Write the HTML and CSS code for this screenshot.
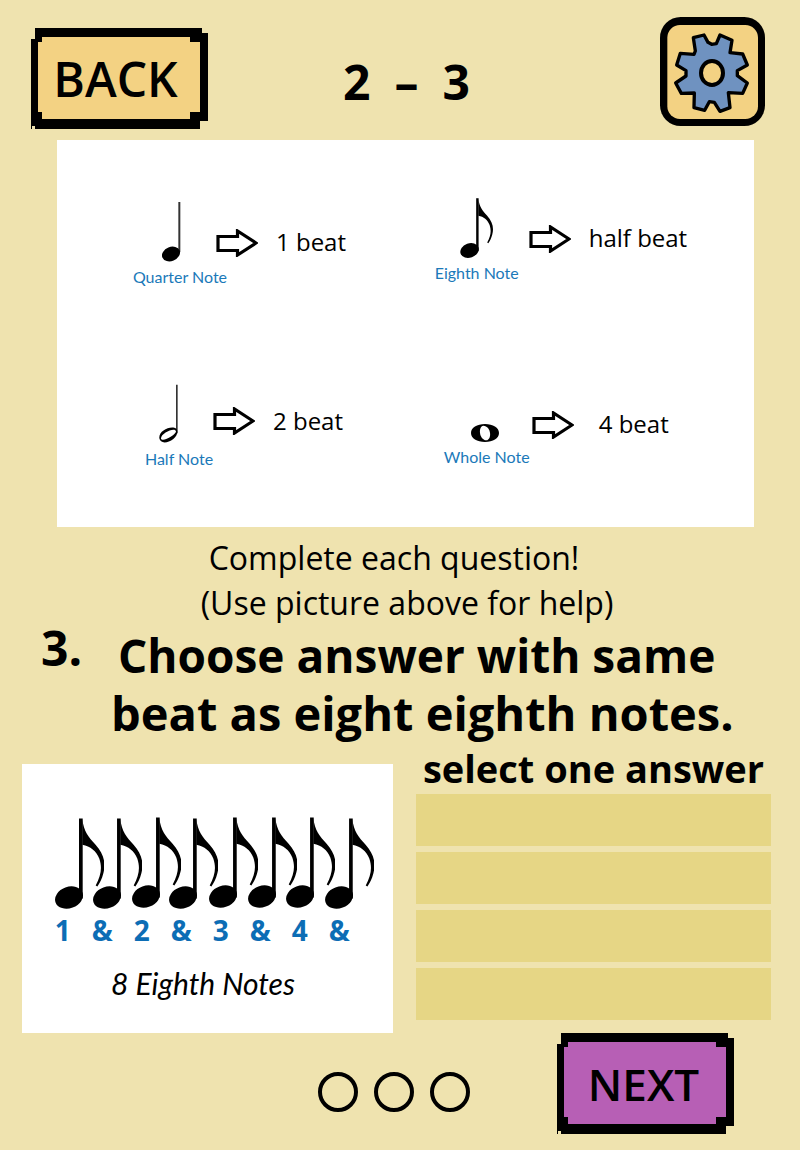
FILE: index.html
```html
<!DOCTYPE html>
<html lang="en">
<head>
<meta charset="utf-8">
<meta name="viewport" content="width=device-width, initial-scale=1">
<title>Note Values 2 – 3</title>
<link rel="stylesheet" href="styles.css">
</head>
<body>
<svg class="sprites" aria-hidden="true">
  <symbol id="frame" viewBox="0 0 177 101" preserveAspectRatio="none">
    <path d="M4 0H171V5H177V93H169V101H4V98H1V101H0V11H4Z" fill="#000"/>
    <path d="M11 9H159V14H169V84H159V91H11V84H7V14H11Z" fill="currentColor"/>
  </symbol>
  <symbol id="arrow" viewBox="0 0 42 28">
    <path d="M2 7.500H21.500V2L40 14L21.500 26V21.500H2Z" fill="none" stroke="#000" stroke-width="3.200"/>
  </symbol>
  <symbol id="eighth" viewBox="0 0 147 272">
    <path d="M72 1h11v240h-11z"/>
    <ellipse cx="42" cy="238" rx="43" ry="32" transform="rotate(-20 42 238)"/>
    <path d="M82 3C86 40 101 56 121 79C147 108 153 135 145 165C141 182 134 194 127 205L122 202C138 171 142 150 133 122C124 99 106 84 82 80Z"/>
  </symbol>
</svg>

<main class="page">
  <header class="topbar">
    <button class="pixel-btn back" type="button">
      <svg class="pixel-frame" aria-hidden="true"><use href="#frame"/></svg>
      <span class="pixel-label">BACK</span>
    </button>
    <h1 class="level"><span>2</span><span>–</span><span>3</span></h1>
    <button class="settings" type="button" aria-label="Settings">
      <svg class="gear" viewBox="60 36 315 327" aria-hidden="true">
        <rect x="60" y="36" width="315" height="327" rx="62"/>
        <rect x="82" y="60" width="272" height="282" rx="38" fill="#f3d283"/>
        <path d="M160 98L192 90L204 112L215 118L229 116L240 90L276 106L270 143L308 147L322 180L292 197V212L322 234L308 265L265 263L270 308L240 319L223 292L208 290L194 316L162 308L163 264L124 265L107 234L138 213V197L110 180L121 145L162 148L166 138Z" fill="#6f92c0" stroke="#000" stroke-width="10" stroke-linejoin="round"/>
        <ellipse cx="216" cy="204" rx="33" ry="36" fill="#f3d283" stroke="#000" stroke-width="12"/>
      </svg>
    </button>
  </header>

  <section class="legend" aria-label="Note values">
    <div class="value value-quarter">
      <svg class="note" viewBox="0 0 57 180" aria-hidden="true">
        <path d="M49 0h6v150h-6z" fill="#333"/>
        <ellipse cx="27" cy="156" rx="28" ry="21" transform="rotate(-22 27 156)"/>
      </svg>
      <svg class="arrow" aria-hidden="true"><use href="#arrow"/></svg>
      <span class="beats">1 beat</span>
      <span class="note-name">Quarter Note</span>
    </div>
    <div class="value value-eighth">
      <svg class="note note-eighth" aria-hidden="true"><use href="#eighth"/></svg>
      <svg class="arrow" aria-hidden="true"><use href="#arrow"/></svg>
      <span class="beats">half beat</span>
      <span class="note-name">Eighth Note</span>
    </div>
    <div class="value value-half">
      <svg class="note" viewBox="0 0 57 180" aria-hidden="true">
        <path d="M51 2h5v146h-5z" fill="#333"/>
        <path fill-rule="evenodd" d="M1 163C-1 142 27 127 46 131C59 134 58 152 43 165C26 178 4 180 1 163ZM6 164C10 176 51 153 51 142C49 128 5 147 6 164Z"/>
      </svg>
      <svg class="arrow" aria-hidden="true"><use href="#arrow"/></svg>
      <span class="beats">2 beat</span>
      <span class="note-name">Half Note</span>
    </div>
    <div class="value value-whole">
      <svg class="note note-whole" viewBox="0 0 84 54" aria-hidden="true">
        <path fill-rule="evenodd" d="M42 0C66 0 84 11 84 27S66 54 42 54S0 43 0 27S18 0 42 0ZM37 5C21 7 24 47 46 49C64 47 61 6 37 5Z"/>
      </svg>
      <svg class="arrow" aria-hidden="true"><use href="#arrow"/></svg>
      <span class="beats">4 beat</span>
      <span class="note-name">Whole Note</span>
    </div>
  </section>

  <div class="instructions">
    <p class="complete">Complete each question!</p>
    <p class="hint">(Use picture above for help)</p>
  </div>

  <div class="question">
    <span class="number">3.</span>
    <h2 class="prompt">
      <span class="prompt-line">Choose answer with same</span>
      <span class="prompt-line">beat as eight eighth notes.</span>
    </h2>
  </div>

  <div class="work">
    <figure class="notes-card">
      <svg class="notes" viewBox="0 0 320 93" role="img" aria-label="Eight eighth notes">
        <use href="#eighth" x="0" y="1" width="49" height="91"/>
        <use href="#eighth" x="38" y="1" width="49" height="91"/>
        <use href="#eighth" x="77" y="0" width="49" height="91"/>
        <use href="#eighth" x="114" y="1" width="49" height="91"/>
        <use href="#eighth" x="154" y="0" width="49" height="91"/>
        <use href="#eighth" x="193" y="0" width="49" height="91"/>
        <use href="#eighth" x="231" y="0" width="49" height="91"/>
        <use href="#eighth" x="270" y="1" width="49" height="91"/>
      </svg>
      <div class="counts">
        <span>1</span><span>&amp;</span><span>2</span><span>&amp;</span><span>3</span><span>&amp;</span><span>4</span><span>&amp;</span>
      </div>
      <figcaption class="caption">8 Eighth Notes</figcaption>
    </figure>
    <div class="answers">
      <h3 class="select">select one answer</h3>
      <button class="answer" type="button" aria-label="Answer 1"></button>
      <button class="answer" type="button" aria-label="Answer 2"></button>
      <button class="answer" type="button" aria-label="Answer 3"></button>
      <button class="answer" type="button" aria-label="Answer 4"></button>
    </div>
  </div>

  <footer class="bottombar">
    <div class="progress">
      <span class="dot"></span><span class="dot"></span><span class="dot"></span>
    </div>
    <button class="pixel-btn next" type="button">
      <svg class="pixel-frame" aria-hidden="true"><use href="#frame"/></svg>
      <span class="pixel-label">NEXT</span>
    </button>
  </footer>
</main>
</body>
</html>
```
FILE: styles.css
```css
* { box-sizing: border-box; }

body {
  margin: 0;
  background: #efe3af;
  color: #000;
  font-family: "Comic Sans MS", "Open Sans", sans-serif;
}

h1, h2, h3, p, figure { margin: 0; }

button {
  border: 0;
  padding: 0;
  color: inherit;
  font: inherit;
  cursor: pointer;
}

.sprites { position: absolute; width: 0; height: 0; }

.topbar {
  display: grid;
  grid-template-columns: 1fr auto 1fr;
  align-items: start;
  padding: 17px 35px 11px 31px;
}

.pixel-btn {
  position: relative;
  width: 177px;
  height: 101px;
  background: none;
}

.pixel-frame {
  position: absolute;
  inset: 0;
  width: 100%;
  height: 100%;
}

.pixel-label { position: relative; }

.back { margin-top: 11px; font-size: 48px; font-weight: 600; }
.back .pixel-frame { color: #f3d283; }
.back .pixel-label { padding-right: 8px; }

.next { font-size: 44px; font-weight: 600; }
.next .pixel-frame { color: #b75fb5; }
.next .pixel-label { padding-right: 4px; }

.level {
  display: flex;
  gap: 24px;
  padding: 32px 0 0 17px;
  font-size: 48px;
  line-height: 66px;
}

.settings {
  justify-self: end;
  width: 105px;
  height: 109px;
  background: none;
}

.gear { display: block; width: 100%; height: 100%; }

.legend {
  display: grid;
  grid-template-columns: 43fr 57fr;
  grid-template-rows: 184px 145px;
  margin: 0 46px 0 57px;
  padding-top: 58px;
  background: #fff;
}

.value {
  display: grid;
  grid-template-columns: 84px 42px auto;
  grid-template-rows: 60px 28px;
  align-content: start;
  align-items: center;
  padding: 4px 0 0 75px;
}

.value-eighth { grid-template-columns: 100px 42px auto; padding: 0 0 0 72px; }
.value-half { grid-template-columns: 82px 42px auto; padding: 2px 0 0 74px; }
.value-whole { grid-template-columns: 93px 42px auto; padding: 0 0 0 82px; }

.note { width: 19px; height: 60px; margin-left: 30px; }
.note-eighth { width: 35px; }
.value-half .note { margin-left: 28px; }
.note-whole { width: 28px; height: 18px; align-self: end; margin-left: 32px; }

.arrow { width: 42px; height: 28px; margin-top: 22px; }
.value-half .arrow { margin-top: 14px; }
.value-whole .arrow { margin-top: 26px; }

.beats {
  padding: 20px 0 0 18px;
  font-size: 24px;
  line-height: 28px;
}
.value-half .beats { padding-top: 14px; }
.value-whole .beats { padding: 24px 0 0 25px; }

.note-name {
  grid-column: 1 / -1;
  width: 96px;
  padding-top: 2px;
  color: #1b79b9;
  font-family: Lato, sans-serif;
  font-size: 16px;
  line-height: 20px;
  text-align: center;
  white-space: nowrap;
}

.instructions {
  padding: 8px 0 0;
  font-size: 32px;
  line-height: 45px;
  text-align: center;
}

.complete { padding-right: 12px; }
.hint { padding-left: 14px; }

.question {
  display: flex;
  align-items: flex-start;
  padding: 1px 24px 0 41px;
  font-size: 48px;
  font-weight: 700;
  line-height: 58px;
}

.number { flex: none; width: 70px; line-height: 44px; }

.prompt { font-size: 47px; line-height: 58px; }
.prompt-line { display: block; }
.prompt-line:first-child { padding-left: 7px; font-size: 46px; }

.work {
  display: grid;
  grid-template-columns: minmax(0, 371fr) minmax(0, 355fr);
  column-gap: 23px;
  align-items: start;
  padding: 0 29px 0 22px;
}

.notes-card {
  margin-top: 22px;
  padding: 53px 20px 32px 21px;
  background: #fff;
}

.notes { display: block; width: 97%; margin-left: 12px; }

.counts {
  display: grid;
  grid-template-columns: repeat(8, 1fr);
  padding: 4px 14px 0 0;
  color: #0c6db5;
  font-family: "Open Sans", sans-serif;
  font-size: 28px;
  font-weight: 700;
  line-height: 32px;
  text-align: center;
}

.caption {
  padding: 19px 10px 0 0;
  font-family: Lato, sans-serif;
  font-size: 30px;
  font-style: italic;
  line-height: 36px;
  text-align: center;
}

.answers { display: grid; row-gap: 6px; }

.select {
  margin-bottom: -6px;
  font-size: 38px;
  line-height: 52px;
  text-align: center;
  white-space: nowrap;
}

.answer { height: 52px; background: #e6d685; }

.bottombar {
  display: grid;
  grid-template-columns: 1fr auto 1fr;
  align-items: center;
  padding: 0 66px 16px 53px;
}

.progress {
  display: flex;
  grid-column: 2;
  gap: 16px;
  padding-top: 16px;
}

.dot {
  width: 40px;
  height: 40px;
  border: 4px solid #000;
  border-radius: 50%;
}

.next { justify-self: end; }
```
